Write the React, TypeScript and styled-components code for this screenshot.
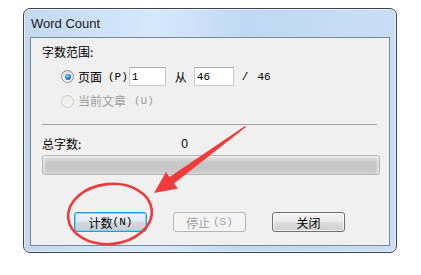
import styled, { createGlobalStyle } from "styled-components";

const GlobalStyle = createGlobalStyle`
  html, body {
    margin: 0;
    padding: 0;
    background: #fff;
  }
  body {
    font-family: "Noto Sans CJK SC", sans-serif;
    font-size: 12px;
    color: #000;
  }
`;

const Page = styled.div`
  position: relative;
  width: 421px;
  height: 275px;
  padding: 8px 0 0 23px;
  box-sizing: border-box;
  overflow: hidden;
`;

const Window = styled.div`
  width: 374px;
  height: 245px;
  box-sizing: border-box;
  border: 1px solid #3c4450;
  border-radius: 7px;
  background: linear-gradient(
    to right,
    #c3d9f1 0%,
    #d6e8fb 35%,
    #c0d8f4 60%,
    #c9def5 100%
  );
  box-shadow: inset 0 0 0 1px rgba(255, 255, 255, 0.55);
  padding: 0 6px 6px 6px;
  display: flex;
  flex-direction: column;
`;

const TitleBar = styled.div`
  height: 28px;
  display: flex;
  align-items: center;
  padding-left: 1px;
  font-family: "Liberation Sans", Arial, sans-serif;
  font-size: 13px;
  color: #1b1b1b;
`;

const Panel = styled.div`
  flex: 1;
  background: #f0f0f0;
  border: 1px solid #7b8793;
  padding: 6px 9px 0 11px;
  display: flex;
  flex-direction: column;
`;

const Label = styled.div`
  height: 16px;
  line-height: 16px;
  display: flex;
  align-items: center;
`;

const Row = styled.div<{ $top: number; $indent?: number }>`
  display: flex;
  align-items: center;
  margin-top: ${(p) => p.$top}px;
  padding-left: ${(p) => p.$indent ?? 0}px;
`;

const Radio = styled.span<{ $checked?: boolean; $disabled?: boolean }>`
  width: 11px;
  height: 11px;
  border-radius: 50%;
  border: 1px solid ${(p) => (p.$disabled ? "#c8c8c8" : "#8a8d91")};
  background: ${(p) =>
    p.$disabled
      ? "linear-gradient(#ececec, #f6f6f6)"
      : "linear-gradient(#dcdcdc, #fafafa)"};
  display: flex;
  align-items: center;
  justify-content: center;
  flex-shrink: 0;

  &::after {
    content: "";
    display: ${(p) => (p.$checked ? "block" : "none")};
    width: 6px;
    height: 6px;
    border-radius: 50%;
    background: radial-gradient(circle at 40% 35%, #8fd3ff 0%, #2a8ad6 45%, #0b3f80 100%);
  }
`;

const Text = styled.span<{ $disabled?: boolean; $left?: number }>`
  color: ${(p) => (p.$disabled ? "#a0a0a0" : "#000")};
  margin-left: ${(p) => p.$left ?? 0}px;
  white-space: pre;
  line-height: 16px;
`;

const Mono = styled.span<{ $disabled?: boolean; $left?: number }>`
  font-family: "Liberation Mono", "Courier New", monospace;
  font-size: 11px;
  color: ${(p) => (p.$disabled ? "#a0a0a0" : "inherit")};
  margin-left: ${(p) => p.$left ?? 0}px;
  white-space: pre;
`;

const Field = styled.div<{ $width: number; $left: number }>`
  width: ${(p) => p.$width}px;
  height: 19px;
  box-sizing: border-box;
  margin-left: ${(p) => p.$left}px;
  background: #fff;
  border: 1px solid #c8ccd2;
  border-top-color: #abadb3;
  display: flex;
  align-items: center;
  padding-left: 2px;
  font-family: "Liberation Mono", "Courier New", monospace;
  font-size: 11px;
`;

const Separator = styled.div`
  margin-top: 15px;
  margin-right: 3px;
  height: 1px;
  background: #a0a0a0;
`;

const CountRow = styled.div`
  margin-top: 11px;
  height: 16px;
  display: flex;
  align-items: center;
`;

const CountValue = styled.span`
  font-family: "Liberation Sans", Arial, sans-serif;
  font-size: 12px;
  margin-left: 100px;
`;

const Progress = styled.div`
  margin-top: 3px;
  height: 20px;
  box-sizing: border-box;
  border: 1px solid #b4b4b4;
  border-radius: 3px;
  background: linear-gradient(
    to bottom,
    #f2f2f2 0px,
    #dcdcdc 2px,
    #c9c9c9 6px,
    #c6c6c6 12px,
    #cdcdcd 100%
  );
  box-shadow: inset 2px 0 2px rgba(255, 255, 255, 0.5), inset -2px 0 2px rgba(255, 255, 255, 0.5);
`;

const ButtonRow = styled.div`
  margin-top: 37px;
  padding-left: 32px;
  display: flex;
  gap: 26px;
`;

const Button = styled.div<{ $variant?: "default" | "disabled" }>`
  width: 73px;
  height: 20px;
  box-sizing: border-box;
  border-radius: 3px;
  display: flex;
  align-items: center;
  justify-content: center;
  font-size: 12px;
  white-space: pre;
  border: 1px solid
    ${(p) =>
      p.$variant === "default"
        ? "#2b9bd6"
        : p.$variant === "disabled"
        ? "#b5b5b5"
        : "#707070"};
  color: ${(p) => (p.$variant === "disabled" ? "#a0a0a0" : "#000")};
  background: ${(p) =>
    p.$variant === "disabled"
      ? "#f4f4f4"
      : p.$variant === "default"
      ? "linear-gradient(to bottom, #eaf4fa 0%, #dfe9ef 50%, #cfd9df 51%, #c4ced4 100%)"
      : "linear-gradient(to bottom, #f2f2f2 0%, #ebebeb 50%, #dddddd 51%, #cfcfcf 100%)"};
  box-shadow: ${(p) =>
    p.$variant === "default"
      ? "inset 0 0 0 1px #7fd0f5"
      : p.$variant === "disabled"
      ? "none"
      : "inset 0 0 0 1px rgba(255,255,255,0.7)"};
`;

const Overlay = styled.svg`
  position: absolute;
  left: 0;
  top: 0;
  pointer-events: none;
`;

export default function App() {
  return (
    <>
      <GlobalStyle />
      <Page>
        <Window>
          <TitleBar>Word Count</TitleBar>
          <Panel>
            <Label>字数范围:</Label>
            <Row $top={7} $indent={19}>
              <Radio $checked />
              <Text $left={4}>页面</Text>
              <Mono $left={6}>(P)</Mono>
              <Field $width={37} $left={1}>1</Field>
              <Text $left={9}>从</Text>
              <Field $width={40} $left={7}>46</Field>
              <Mono $left={8}>/</Mono>
              <Mono $left={9}>46</Mono>
            </Row>
            <Row $top={7} $indent={19}>
              <Radio $disabled />
              <Text $left={4} $disabled>当前文章</Text>
              <Mono $left={8} $disabled>(U)</Mono>
            </Row>
            <Separator />
            <CountRow>
              <Text>总字数:</Text>
              <CountValue>0</CountValue>
            </CountRow>
            <Progress />
            <ButtonRow>
              <Button $variant="default">
                计数<Mono>(N)</Mono>
              </Button>
              <Button $variant="disabled">
                停止 <Mono>(S)</Mono>
              </Button>
              <Button>关闭</Button>
            </ButtonRow>
          </Panel>
        </Window>
        <Overlay width={421} height={275} viewBox="0 0 421 275">
          <ellipse
            cx={110}
            cy={214}
            rx={42}
            ry={30}
            fill="none"
            stroke="#ee3a3a"
            strokeWidth={2.6}
            transform="rotate(-6 110 214)"
          />
          <polygon
            fill="#ef3b3b"
            points="246,127 174,183.5 178,188.5 154,193 166,172 169.5,177 245,126"
          />
        </Overlay>
      </Page>
    </>
  );
}
